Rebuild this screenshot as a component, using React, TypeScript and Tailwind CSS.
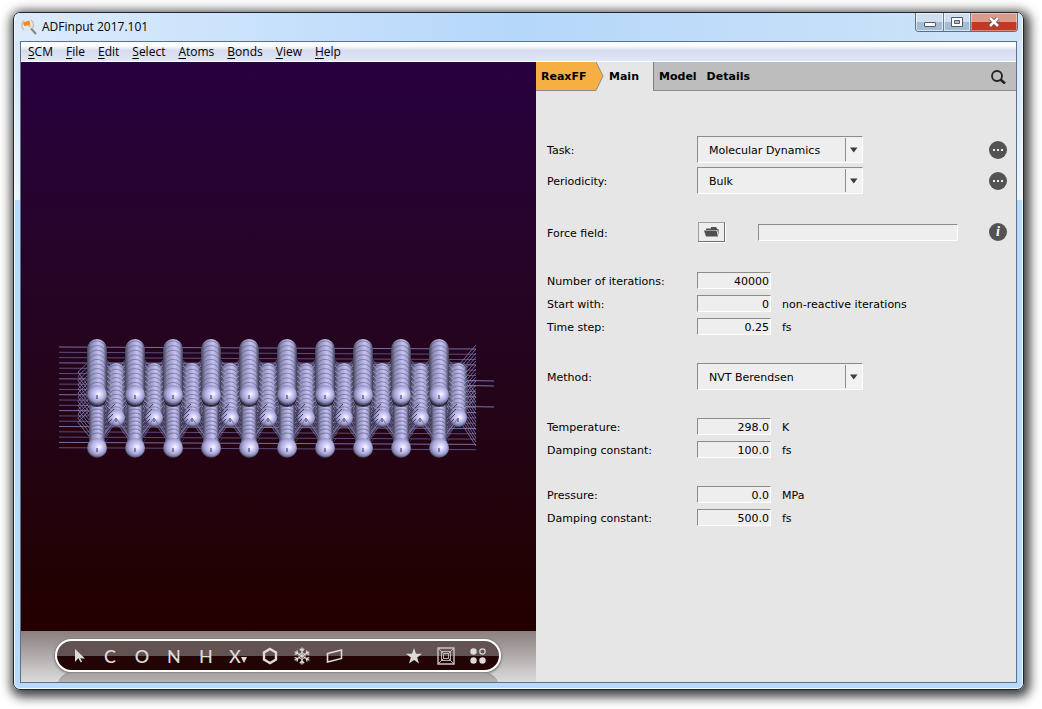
import type { ReactNode } from 'react';

const menus = ['SCM', 'File', 'Edit', 'Select', 'Atoms', 'Bonds', 'View', 'Help'];

const range = (n: number) => Array.from({ length: n }, (_, i) => i);
const columns = range(10);

// A row of atoms seen nearly end-on: a shaded rod with the front atom at its foot
function Rod({ x, top, foot, r, rings }: { x: number; top: number; foot: number; r: number; rings: number }) {
  const step = (foot - r - top) / rings;
  return (
    <g>
      <rect x={x - r} y={top} width={r * 2} height={foot + r - top} rx={r} fill="url(#rod)" />
      {range(rings).map((i) => (
        <path
          key={i}
          d={`M${x - r + 1} ${top + r + i * step}A${r - 1} ${r - 2} 0 0 1 ${x + r - 1} ${top + r + i * step}`}
          fill="none"
          stroke="#5f5d86"
          strokeWidth="1"
          strokeOpacity="0.6"
        />
      ))}
      <circle cx={x} cy={foot} r={r} fill="url(#atom)" />
      <path d={`M${x} ${foot}v4`} stroke="#33324a" strokeWidth="1" />
    </g>
  );
}

function Lattice() {
  return (
    <svg viewBox="0 0 437 126" className="h-[126px] w-[437px] shrink-0" role="img" aria-label="Lattice">
      <defs>
        <radialGradient id="atom" cx="0.52" cy="0.42" r="0.58" fx="0.62" fy="0.46">
          <stop offset="0" stopColor="#fbfaff" />
          <stop offset="0.3" stopColor="#d2cffc" />
          <stop offset="0.6" stopColor="#aeabdd" />
          <stop offset="0.82" stopColor="#807ea8" />
          <stop offset="1" stopColor="#2b2c38" />
        </radialGradient>
        <linearGradient id="rod" x1="0" x2="1" y1="0" y2="0">
          <stop offset="0" stopColor="#3d3f50" />
          <stop offset="0.2" stopColor="#8b8ab2" />
          <stop offset="0.6" stopColor="#c6c3f3" />
          <stop offset="0.82" stopColor="#a3a1d0" />
          <stop offset="1" stopColor="#3a3b4c" />
        </linearGradient>
      </defs>

      {/* Bonds that run along the whole cell */}
      <g stroke="#7776ad" strokeWidth="1">
        {range(20).map((i) => (
          <path key={i} d={`M0 ${11 + i * 5.3}L417 ${13 + i * 5.3}`} strokeOpacity={i % 3 ? 0.65 : 0.95} />
        ))}
        <path d="M380 44L435 45M380 49L435 50M380 70L435 71" />
      </g>

      {/* Bond fans at both ends */}
      <g stroke="#8180b5" strokeWidth="1" strokeOpacity="0.8">
        {range(13).map((i) => (
          <path key={i} d={`M19 ${36 + i * 4.2}L38 ${18 + i * 4}M19 ${36 + i * 4.2}L38 ${62 + i * 4}`} />
        ))}
        {range(14).map((i) => (
          <path key={i} d={`M399 ${30 + i * 4}L417 ${9 + i * 4}M399 ${30 + i * 4}L417 ${58 + i * 4}`} />
        ))}
      </g>

      {/* Bonds between neighbouring rods */}
      {columns.map((c) => {
        const x = 38 + c * 38;
        const last = c === columns.length - 1;
        return (
          <g key={c}>
            <path d={`M${x} 26H${x + (last ? 26 : 38)}V72L${x + 19} 84L${x} 112Z`} fill="#5c5b83" fillOpacity="0.5" />
            {c > 0 && <path d={`M${x} 60V112L${x - 19} 84Z`} fill="#5c5b83" fillOpacity="0.5" />}
            <g stroke="#9290c6" strokeWidth="0.8" strokeOpacity="0.8">
              {range(14).map((i) => (
                <path key={i} d={`M${x} ${14 + i * 4}L${x + 19} ${34 + i * 4}L${x} ${64 + i * 4 - (i > 11 ? 4 : 0)}`} fill="none" />
              ))}
              {!last &&
                range(14).map((i) => (
                  <path key={i} d={`M${x + 38} ${14 + i * 4}L${x + 19} ${34 + i * 4}L${x + 38} ${64 + i * 4 - (i > 11 ? 4 : 0)}`} fill="none" />
                ))}
            </g>
          </g>
        );
      })}

      {columns.map((c) => (
        <g key={c}>
          <rect x={30 + c * 38} y="62" width="16" height="46" fill="url(#rod)" />
          {range(9).map((i) => (
            <path key={i} d={`M${31 + c * 38} ${70 + i * 4}a7 5 0 0 1 14 0`} fill="none" stroke="#5f5d86" strokeOpacity="0.7" />
          ))}
          <Rod x={57 + c * 38} top={27} foot={82} r={9} rings={11} />
        </g>
      ))}

      {/* Bonds in front of the middle row */}
      {columns.map((c) => {
        const x = 38 + c * 38;
        return (
          <g key={c} strokeWidth="1">
            {range(8).map((i) => (
              <path key={i} d={`M${x + 7} ${79 + i * 4}l${11 - i} ${i - 11}`} stroke="#3d3b58" strokeOpacity="0.9" />
            ))}
            {range(9).map((i) => (
              <path key={i} d={`M${x + 28} ${30 + i * 5}l-5 4M${x + 10} ${30 + i * 5}l5 4`} stroke="#a5a3d6" strokeOpacity="0.8" />
            ))}
            <path d={`M${x} 109L${x + 19} 82`} stroke="#7674a4" />
            {c < 9 && <path d={`M${x + 38} 109L${x + 19} 82`} stroke="#7674a4" />}
          </g>
        );
      })}

      {columns.map((c) => (
        <g key={c}>
          <rect x={28 + c * 38} y="102" width="20" height="20" rx="10" fill="url(#atom)" />
          <path d={`M${38 + c * 38} 112v4`} stroke="#33324a" />
          <ellipse cx={38 + c * 38} cy="64" rx="9" ry="7" fill="#15121f" fillOpacity="0.8" />
          <Rod x={38 + c * 38} top={3} foot={59} r={10} rings={10} />
        </g>
      ))}
    </svg>
  );
}

function Tool({ label, children }: { label: string; children: ReactNode }) {
  return (
    <button aria-label={label} className="flex h-7 w-8 items-center justify-center text-[18px] leading-7 font-medium text-[#dedada]">
      {children}
    </button>
  );
}

function Toolbar() {
  return (
    <div className="h-[51px] shrink-0 overflow-hidden bg-linear-to-b from-[#8b7f7f] to-[#dcdcdc] pt-2 pr-[35px] pl-[34px]">
      <div className="flex h-[33px] items-center justify-between rounded-full border-2 border-white bg-linear-to-b from-[#635252] from-52% to-[#230404] to-52% px-[5px] shadow-[0_1px_3px_rgba(0,0,0,0.6)]">
        <div className="flex font-['Lato',sans-serif]">
          <Tool label="Pointer">
            <svg viewBox="0 0 12 14" className="ml-1 h-3.5 w-3" fill="#dedada">
              <path d="M1 0L11 9.500H7L4.500 9L1 13Z" />
              <path d="M5 9l2.500 4" stroke="#dedada" strokeWidth="1.500" />
            </svg>
          </Tool>
          <Tool label="Carbon">C</Tool>
          <Tool label="Oxygen">O</Tool>
          <Tool label="Nitrogen">N</Tool>
          <Tool label="Hydrogen">H</Tool>
          <Tool label="Other element">
            X
            <svg viewBox="0 0 6 6" className="mt-2 h-1.5 w-1.5" fill="#dedada">
              <path d="M0 0H6L3 6Z" />
            </svg>
          </Tool>
          <Tool label="Ring">
            <svg viewBox="0 0 16 18" className="h-[18px] w-4" fill="none" stroke="#dedada" strokeWidth="2.4">
              <path d="M8 2L14 5.5V12.5L8 16L2 12.5V5.5Z" />
            </svg>
          </Tool>
          <Tool label="Crystal">
            <svg viewBox="0 0 18 18" className="h-[18px] w-[18px]" fill="none" stroke="#dedada" strokeWidth="1.3">
              {[0, 60, 120, 180, 240, 300].map((r) => (
                <path key={r} transform={`rotate(${r} 9 9)`} d="M9 9V0.5M6.8 1.8L9 4.2L11.2 1.8" />
              ))}
              <path d="M9 5.500L12 7.300V10.700L9 12.500L6 10.700V7.300Z" strokeWidth="0.8" />
            </svg>
          </Tool>
          <Tool label="Plane">
            <svg viewBox="0 0 17 14" className="h-3.5 w-[17px]" fill="none" stroke="#dedada" strokeWidth="1.6">
              <path d="M1.5 4.5L15.5 1V9.5L1.5 13Z" />
            </svg>
          </Tool>
        </div>
        <div className="flex">
          <Tool label="Favourites">
            <svg viewBox="0 0 16 16" className="h-4 w-4" fill="#dedada">
              <path d="M8 0L10 5.8H16L11.2 9.5L13 15.5L8 12L3 15.5L4.8 9.5L0 5.8H6Z" />
            </svg>
          </Tool>
          <Tool label="Box">
            <svg viewBox="0 0 18 18" className="h-[18px] w-[18px]" fill="none" stroke="#c9c3c3">
              <path d="M1 1H17V17H1Z" strokeWidth="1.400" />
              <path d="M4.500 4.500H13.500V13.500H4.500ZM6.500 6.500H11.500V11.500H6.500ZM1 1L6.500 6.500M17 1L11.500 6.500M1 17L6.500 11.500M17 17L11.500 11.500" strokeWidth="0.900" />
            </svg>
          </Tool>
          <Tool label="Atoms">
            <svg viewBox="0 0 16 16" className="h-4 w-4" fill="#dedada">
              <circle cx="3.500" cy="3.500" r="3.200" />
              <circle cx="12.500" cy="3.500" r="2.700" fill="none" stroke="#dedada" strokeWidth="1.200" />
              <circle cx="3.500" cy="12.500" r="3.200" />
              <circle cx="12.500" cy="12.500" r="3.200" />
            </svg>
          </Tool>
        </div>
      </div>
      {/* Reflection of the bar */}
      <div className="mx-0.5 h-8 rounded-full border-t border-[#8f8b8b] bg-linear-to-b from-[#a39f9f] to-[#bdbbbb] to-40%" />
    </div>
  );
}

function Row({ id, label, children }: { id: string; label: string; children: ReactNode }) {
  return (
    <div className="flex items-center">
      <label htmlFor={id} className="w-[150px] shrink-0 pt-0.5">
        {label}
      </label>
      {children}
    </div>
  );
}

const sunken = 'border border-t-[#8c8c8c] border-l-[#8c8c8c] border-r-white border-b-white bg-[#eeeeee]';

function SelectBox({ id, value }: { id: string; value: string }) {
  return (
    <div className={`relative h-[27px] w-[166px] ${sunken}`}>
      <select id={id} defaultValue={value} className="h-full w-full appearance-none bg-transparent pt-0.5 pl-[11px] outline-none">
        <option>{value}</option>
      </select>
      <span className="pointer-events-none absolute inset-y-px right-0 flex w-[17px] items-center justify-center border-l border-[#8c8c8c] bg-[#f2f2f2]">
        <svg viewBox="0 0 8 6" className="h-1.5 w-2" fill="#3c3c3c">
          <path d="M0 0.500H7.500L3.750 5.500Z" />
        </svg>
      </span>
    </div>
  );
}

function NumberRow({ id, label, value, unit }: { id: string; label: string; value: string; unit?: string }) {
  return (
    <Row id={id} label={label}>
      <input id={id} defaultValue={value} className={`h-[17px] w-[74px] pt-px pr-px text-right outline-none ${sunken}`} />
      {unit && <span className="ml-[11px] pt-0.5">{unit}</span>}
    </Row>
  );
}

function MoreButton() {
  return (
    <button aria-label="More options" className="ml-auto flex h-[18px] w-[18px] items-center justify-center gap-0.5 rounded-full bg-[#535353]">
      <span className="h-0.5 w-0.5 bg-[#eeeeee]" />
      <span className="h-0.5 w-0.5 bg-[#eeeeee]" />
      <span className="h-0.5 w-0.5 bg-[#eeeeee]" />
    </button>
  );
}

function Settings() {
  return (
    <form className="flex flex-col gap-7 pt-[45px] pr-[9px] pl-[11px] text-[11px] leading-[15px]" onSubmit={(e) => e.preventDefault()}>
      <div className="flex flex-col gap-1">
        <Row id="task" label="Task:">
          <SelectBox id="task" value="Molecular Dynamics" />
          <MoreButton />
        </Row>
        <Row id="periodicity" label="Periodicity:">
          <SelectBox id="periodicity" value="Bulk" />
          <MoreButton />
        </Row>
      </div>

      <div className="pb-0.5">
        <Row id="forcefield" label="Force field:">
          <button type="button" aria-label="Open force field" className="ml-px flex h-5 w-[27px] items-center justify-center border border-t-[#a0a0a0] border-l-[#a0a0a0] border-r-[#707070] border-b-[#707070] bg-[#eeeeee] shadow-[1px_1px_0_#ffffff]">
            <svg viewBox="0 0 15 10" className="h-2.5 w-[15px]" fill="#505050">
              <path d="M2 3V1.500H7V0H12L13 1.500V3Z" />
              <path d="M0 3.500H12.500L14 9.500H2Z" />
              <path d="M13 2L14.500 2V8Z" />
            </svg>
          </button>
          <input id="forcefield" className={`ml-[33px] h-[17px] w-[200px] outline-none ${sunken}`} />
          <button type="button" aria-label="Information" className="ml-auto flex h-[18px] w-[18px] items-center justify-center rounded-full bg-[#535353] font-['Liberation_Serif',serif] text-[14px] leading-[18px] font-bold text-white italic">
            i
          </button>
        </Row>
      </div>

      <div className="flex flex-col gap-1.5">
        <NumberRow id="iterations" label="Number of iterations:" value="40000" />
        <NumberRow id="start" label="Start with:" value="0" unit="non-reactive iterations" />
        <NumberRow id="timestep" label="Time step:" value="0.25" unit="fs" />
      </div>

      <Row id="method" label="Method:">
        <SelectBox id="method" value="NVT Berendsen" />
      </Row>

      <div className="flex flex-col gap-1.5">
        <NumberRow id="temperature" label="Temperature:" value="298.0" unit="K" />
        <NumberRow id="tdamping" label="Damping constant:" value="100.0" unit="fs" />
      </div>

      <div className="flex flex-col gap-1.5">
        <NumberRow id="pressure" label="Pressure:" value="0.0" unit="MPa" />
        <NumberRow id="pdamping" label="Damping constant:" value="500.0" unit="fs" />
      </div>
    </form>
  );
}

function Tabs() {
  return (
    <div className="flex h-[29px] shrink-0 text-[11px] leading-[27px] font-bold">
      <button className="w-[60px] border-b border-[#8c8c8c] bg-[#f6af42] pt-px pl-[5px] text-left">ReaxFF</button>
      <svg viewBox="0 0 8 29" className="h-[29px] w-2 bg-[#e6e6e6]">
        <path d="M0 0L7 14L0 28.500Z" fill="#f6af42" />
        <path d="M0 0L7 14L0 28.500" fill="none" stroke="#8c8c8c" />
      </svg>
      <button className="w-[50px] border-r border-[#808080] bg-[#e6e6e6] pl-[5px] text-left">Main</button>
      <div className="flex flex-1 items-center border-b border-[#8c8c8c] bg-[#bdbdbd] pt-px pr-2.5 pl-[5px]">
        <button className="mr-2.5">Model</button>
        <button>Details</button>
        <button aria-label="Search" className="ml-auto">
          <svg viewBox="0 0 15 14" className="h-3.5 w-[15px]" fill="none" stroke="#222222">
            <circle cx="6" cy="6" r="5" strokeWidth="1.800" />
            <path d="M9.500 9.500L14 13.500" strokeWidth="2.600" />
          </svg>
        </button>
      </div>
    </div>
  );
}

function TitleBar() {
  return (
    <header className="flex h-7 items-start justify-between bg-linear-to-r from-[#dcebfc] via-[#b5d7fa] to-[#cfe4f8] pr-1">
      <div className="flex h-7 items-center pl-1.5 font-['Open_Sans',sans-serif] text-[12px] text-black">
        <svg viewBox="0 0 16 16" className="mr-[5px] h-4 w-4" fill="none">
          <path d="M3 1.500C0 4 0 8 3 11M10 1C12.500 3 13 6 12 9" stroke="#cbbfb4" strokeWidth="1.500" />
          <path d="M10 9.500L15 15" stroke="#858585" strokeWidth="2" />
          <path d="M2 3.500L8.500 1.500L9.500 8L6.500 6.500L3 7Z" fill="#f58a1f" />
          <path d="M6 6L9 6L10 9Z" fill="#fcb75e" />
        </svg>
        ADFinput 2017.101
      </div>
      <div className="flex h-[19px] overflow-hidden rounded-b border border-t-0 border-[#5b6b80]">
        <button aria-label="Minimize" className="flex w-7 items-center justify-center border-r border-[#6b7b90] bg-linear-to-b from-[#cfdff0] from-50% to-[#a5bcd5] to-50% shadow-[inset_0_0_0_1px_rgba(255,255,255,0.6)]">
          <span className="mt-1 h-[5px] w-3 rounded-[1px] border border-[#555a65] bg-white" />
        </button>
        <button aria-label="Maximize" className="flex w-[27px] items-center justify-center border-r border-[#6b7b90] bg-linear-to-b from-[#cfdff0] from-50% to-[#a5bcd5] to-50% shadow-[inset_0_0_0_1px_rgba(255,255,255,0.6)]">
          <svg viewBox="0 0 12 10" className="h-2.5 w-3">
            <path d="M0.500 0.500H11.500V9.500H0.500Z" fill="#ffffff" stroke="#555a65" />
            <path d="M3.500 3.500H8.500V6.500H3.500Z" fill="#a9bfd8" stroke="#555a65" />
          </svg>
        </button>
        <button aria-label="Close" className="flex w-[46px] items-center justify-center bg-linear-to-b from-[#dd9a8b] from-50% to-[#c03a22] to-50% shadow-[inset_0_0_0_1px_rgba(255,255,255,0.4)]">
          <svg viewBox="0 0 12 10" className="h-2.5 w-3">
            <path d="M2 1L10 9M10 1L2 9" stroke="#57434a" strokeWidth="4" />
            <path d="M2 1L10 9M10 1L2 9" stroke="#ffffff" strokeWidth="2.600" />
          </svg>
        </button>
      </div>
    </header>
  );
}

export default function App() {
  return (
    <div className="flex h-screen bg-white pt-3 pr-[18px] pb-[19px] pl-[13px] font-['DejaVu_Sans',sans-serif] text-black">
      <div className="flex min-w-0 flex-1 flex-col overflow-hidden rounded-[7px] border border-[#20242c] bg-[linear-gradient(to_bottom,#cfe3f8,#edf5fd_187px,#b8dafc_187px)] shadow-[2px_3px_11px_4px_rgba(0,0,0,0.75)]">
        <div className="flex min-h-0 flex-1 flex-col rounded-md border border-white/80">
          <div className="-mt-px flex min-h-0 flex-1 flex-col">
            <TitleBar />
            <div className="mx-[5px] mb-[5px] flex min-h-0 flex-1 flex-col border border-[#5f7186]">
              <nav className="flex h-5 shrink-0 items-center gap-[13px] border-b border-white bg-linear-to-b from-[#fbfcfe] from-20% via-[#d5dcef] via-45% to-[#e2e7f6] pl-[7px] font-['Open_Sans',sans-serif] text-[12px] leading-5">
                {menus.map((menu) => (
                  <button key={menu}>
                    <span className="underline underline-offset-2">{menu[0]}</span>
                    {menu.slice(1)}
                  </button>
                ))}
              </nav>
              <main className="flex min-h-0 flex-1">
                <section className="flex min-w-0 flex-[515] flex-col">
                  <div className="flex min-h-0 flex-1 items-center bg-linear-to-b from-[#28003f] to-[#220000] pt-[104px] pl-[38px]">
                    <Lattice />
                  </div>
                  <Toolbar />
                </section>
                <section className="flex min-w-0 flex-[480] flex-col bg-[#e6e6e6]">
                  <Tabs />
                  <Settings />
                </section>
              </main>
            </div>
          </div>
        </div>
      </div>
    </div>
  );
}
